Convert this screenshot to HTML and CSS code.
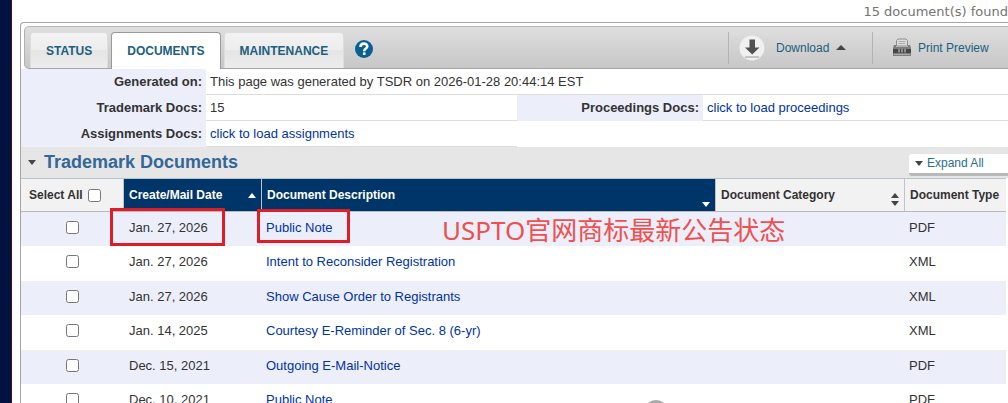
FILE: index.html
```
<!DOCTYPE html>
<html lang="en">
  <head>
    <meta charset="utf-8" />
    <meta name="viewport" content="width=device-width, initial-scale=1" />
    <title>Trademark Documents</title>
    <link rel="stylesheet" href="styles.css" />
  </head>

  <body>
    <div class="page">
      <p class="found">15 document(s) found</p>

      <main class="panel">
        <div class="toolbar">
          <nav class="tabs">
            <button type="button" class="tab">STATUS</button>
            <button type="button" class="tab active">DOCUMENTS</button>
            <button type="button" class="tab">MAINTENANCE</button>
          </nav>
          <a href="#" class="help" aria-label="Help">
            <svg width="18" height="18" viewBox="0 0 18 18">
              <circle cx="9" cy="9" r="9" fill="#075f94" />
              <path d="M5.5 6.9 C5.5 2.6 12.4 2.7 12.300 6.500 C12.200 8.700 9.200 8.500 9.200 11.200" fill="none" stroke="#fff" stroke-width="2.600" />
              <rect x="7.900" y="12.400" width="2.600" height="2.600" fill="#fff" />
            </svg>
          </a>
          <div class="tools">
            <button type="button" class="tool download">
              <svg width="26" height="26" viewBox="0 0 26 26">
                <circle cx="13" cy="13" r="12.5" fill="#f0f0f0" />
                <path d="M10.500 4.500h5.500v8h4.500L13.200 19.500 6 12.500h4.500z" fill="#505050" />
                <rect x="6" y="21" width="14" height="2" fill="#c4c4c4" />
              </svg>
              Download
              <span class="arrow up"></span>
            </button>
            <a href="#" class="tool print">
              <svg width="18" height="19" viewBox="0 0 18 19">
                <path d="M3.500 8V2.500L5 1h8l1.500 1.500V8z" fill="#dedede" stroke="#8c8c8c" />
                <path d="M5.500 3.500h7M5.500 5.500h7" stroke="#aaa" />
                <path d="M1 7h2v2h12V7h2l1 3v8H0v-8z" fill="#7d7d7d" />
                <rect y="11" width="18" height="4" fill="#464646" />
                <path d="M6 11v3.500M9 11v3.500M12 11v3.500" stroke="#d2d2d2" />
                <rect x="1" y="16" width="16" height="1" fill="#aaa" />
              </svg>
              Print Preview
            </a>
          </div>
        </div>

        <dl class="info">
          <dt>Generated on:</dt>
          <dd class="wide">This page was generated by TSDR on 2026-01-28 20:44:14 EST</dd>
          <dt>Trademark Docs:</dt>
          <dd>15</dd>
          <dt>Proceedings Docs:</dt>
          <dd><a href="#">click to load proceedings</a></dd>
          <dt>Assignments Docs:</dt>
          <dd><a href="#">click to load assignments</a></dd>
        </dl>

        <div class="section">
          <span class="arrow down"></span>
          <h2>Trademark Documents</h2>
          <button type="button" class="expand"><span class="arrow down"></span>Expand All</button>
        </div>

        <table class="docs">
          <thead>
            <tr>
              <th class="col-select">
                <label for="all">Select All <input type="checkbox" id="all" /></label>
              </th>
              <th class="col-date sorted">
                <div class="head">Create/Mail Date <span class="arrow up"></span></div>
              </th>
              <th class="col-desc sorted">
                <div class="head">Document Description <span class="arrow down low"></span></div>
              </th>
              <th class="col-category">
                <div class="head">
                  Document Category
                  <span class="both"><span class="arrow up"></span><span class="arrow down"></span></span>
                </div>
              </th>
              <th class="col-type">Document Type</th>
            </tr>
          </thead>
          <tbody>
            <tr>
              <td><input type="checkbox" aria-label="Select Public Note, Jan. 27, 2026" /></td>
              <td class="marked">Jan. 27, 2026<span class="mark mark-date"></span></td>
              <td class="marked">
                <a href="#">Public Note</a><span class="mark mark-desc"></span>
                <span class="note" lang="zh">USPTO官网商标最新公告状态</span>
              </td>
              <td></td>
              <td>PDF</td>
            </tr>
            <tr>
              <td><input type="checkbox" aria-label="Select Intent to Reconsider Registration" /></td>
              <td>Jan. 27, 2026</td>
              <td><a href="#">Intent to Reconsider Registration</a></td>
              <td></td>
              <td>XML</td>
            </tr>
            <tr>
              <td><input type="checkbox" aria-label="Select Show Cause Order to Registrants" /></td>
              <td>Jan. 27, 2026</td>
              <td><a href="#">Show Cause Order to Registrants</a></td>
              <td></td>
              <td>XML</td>
            </tr>
            <tr>
              <td><input type="checkbox" aria-label="Select Courtesy E-Reminder" /></td>
              <td>Jan. 14, 2025</td>
              <td><a href="#">Courtesy E-Reminder of Sec. 8 (6-yr)</a></td>
              <td></td>
              <td>XML</td>
            </tr>
            <tr>
              <td><input type="checkbox" aria-label="Select Outgoing E-Mail-Notice" /></td>
              <td>Dec. 15, 2021</td>
              <td><a href="#">Outgoing E-Mail-Notice</a></td>
              <td></td>
              <td>PDF</td>
            </tr>
            <tr>
              <td><input type="checkbox" aria-label="Select Public Note, Dec. 10, 2021" /></td>
              <td>Dec. 10, 2021</td>
              <td><a href="#">Public Note</a></td>
              <td></td>
              <td>PDF</td>
            </tr>
          </tbody>
        </table>
      </main>
      <span class="watermark"></span>
    </div>
  </body>
</html>
```
FILE: styles.css
```
* {
  box-sizing: border-box;
}
html {
  height: 100%;
  overflow: hidden;
}
body {
  height: 100%;
  margin: 0;
  overflow: hidden;
  background-color: #fff;
  color: #333;
  font-family: "Liberation Sans", Arial, sans-serif;
  font-size: 13px;
}
a {
  color: #0033a8;
  text-decoration: none;
}
button {
  border: 0;
  font-family: inherit;
  cursor: pointer;
}
.page {
  position: relative;
  height: 100%;
  padding-left: 8px;
  border-left: 12px solid #00123f;
}
.page::before {
  content: "";
  position: absolute;
  top: 0;
  bottom: 0;
  left: -1px;
  width: 1px;
  background-color: #4a1024;
}
.found {
  height: 22px;
  margin: 0;
  color: #747474;
  font-family: "DejaVu Sans", Verdana, sans-serif;
  line-height: 24px;
  text-align: right;
  white-space: nowrap;
}

/* panel */
.panel {
  border-top: 1px solid #a6a6a6;
  border-left: 1px solid #a6a6a6;
  border-top-left-radius: 4px;
}

/* toolbar */
.toolbar {
  display: flex;
  align-items: flex-end;
  height: 43px;
  margin: 3px 0 0 3px;
  padding-left: 5px;
  border-top: 1px solid #b8b8b8;
  border-bottom: 1px solid #a6a6a6;
  border-left: 1px solid #b0b0b0;
  border-radius: 5px 0 0 5px;
  background-image: linear-gradient(#dfdfdf, #d2d2d2 50%, #c8c8c8);
}
.tabs {
  display: flex;
  gap: 3px;
  margin-bottom: -1px;
}
.tab {
  height: 36px;
  margin-bottom: 1px;
  padding: 0 15px;
  border: 1px solid #ddd;
  border-bottom: 0;
  border-radius: 4px 4px 0 0;
  background-image: linear-gradient(#f2f2f2, #ededed 50%, #e5e5e5 50%, #ececec);
  color: #205f7d;
  font-size: 12px;
  font-weight: bold;
}
.tab.active {
  height: 37px;
  margin-bottom: 0;
  border-color: #999;
  background: #fff;
}
.help {
  height: 18px;
  margin: 0 0 10px 11px;
}
.help svg {
  display: block;
}
.tools {
  display: flex;
  align-self: center;
  margin-left: auto;
}
.tool {
  display: flex;
  align-items: center;
  height: 32px;
  padding: 0;
  border-left: 1px solid #b3b3b3;
  background: none;
  color: #205f7d;
  font-size: 12px;
}
.download {
  gap: 11px;
  width: 144px;
  padding-left: 10px;
}
.download .arrow {
  margin-left: -4px;
  border-width: 0 5px 5px;
}
.print {
  gap: 7px;
  width: 136px;
  padding-left: 20px;
}

/* arrows */
.arrow {
  display: block;
  flex: none;
  border: 0 solid transparent;
  border-width: 0 4px;
}
.up {
  border-bottom: 5px solid #444;
}
.down {
  border-top: 5px solid #444;
}

/* generated on, docs */
.info {
  display: grid;
  grid-template-columns: 185px minmax(311px, 1fr) 186px minmax(305px, 1fr);
  margin: 0;
  line-height: 25px;
}
.info dt {
  padding-right: 4px;
  background-color: #eceefa;
  font-weight: bold;
  text-align: right;
}
.info dd {
  margin: 0;
  padding-left: 4px;
  border-bottom: 1px solid #ddd;
}
.info .wide {
  grid-column: span 3;
}

/* section title */
.section {
  display: flex;
  align-items: center;
  height: 31px;
  padding-left: 7px;
  background-color: #e6e6e6;
}
.section h2 {
  margin: 0 auto 0 8px;
  color: #336699;
  font-size: 18px;
}
.expand {
  display: flex;
  align-items: center;
  gap: 4px;
  width: 99px;
  height: 22px;
  margin-top: 4px;
  padding: 0 0 0 6px;
  border-bottom: 3px solid #b9b9b9;
  border-radius: 3px 0 0 3px;
  background-color: #fff;
  color: #26708c;
  font-size: 12px;
}

/* table */
.docs {
  width: calc(100% - 2px);
  table-layout: fixed;
  border-collapse: separate;
  border-spacing: 0;
}
.docs th,
.docs td {
  padding: 0 5px;
  text-align: left;
  white-space: nowrap;
}
.docs th {
  height: 34px;
  border-top: 1px solid #b8c4cc;
  border-bottom: 1px solid #b8b8b8;
  background-color: #f2f2f2;
  font-size: 12px;
}
.docs .sorted {
  background-color: #003569;
  color: #fff;
}
.docs th + th {
  border-left: 1px solid #c0c4c8;
}
.docs .col-select {
  width: 102px;
  padding-left: 8px;
}
.col-date {
  width: 138px;
}
.col-category {
  width: 189px;
}
.col-type {
  width: 102px;
}
.col-select label,
.head {
  display: flex;
  align-items: center;
}
.col-select label {
  gap: 5px;
}
.head {
  justify-content: space-between;
  height: 32px;
}
.sorted .up {
  border-bottom-color: #fff;
}
.sorted .down {
  border-top-color: #fff;
}
.low {
  align-self: flex-end;
  margin-bottom: 4px;
}
.both {
  display: grid;
  gap: 3px;
  padding-top: 8px;
}
.docs td {
  height: 34px;
  padding-bottom: 4px;
}
.docs tr:nth-child(even) td {
  height: 35px;
}
.docs tbody tr:nth-child(odd) {
  background-color: #eceefa;
}
.docs td:first-child {
  padding: 0 0 6px;
  text-align: center;
}
.docs td:nth-child(2) {
  padding-left: 6px;
}
.docs input {
  width: 13px;
  height: 13px;
  margin: 0;
  vertical-align: middle;
}

/* red marks over the first row */
.marked {
  position: relative;
}
.mark {
  position: absolute;
  border: 3px solid #dc1f26;
}
.mark-date {
  top: -4px;
  left: -13px;
  width: 115px;
  height: 38px;
}
.mark-desc {
  top: -3px;
  left: -4px;
  width: 93px;
  height: 34px;
}
.note {
  position: absolute;
  top: 0;
  left: 181px;
  color: #f0504f;
  font-family: "Noto Sans", "Noto Sans CJK SC", sans-serif;
  font-size: 26px;
  line-height: 36px;
}
.watermark {
  position: absolute;
  bottom: -21px;
  left: 632px;
  width: 24px;
  height: 24px;
  border-radius: 50%;
  background-color: #aaa;
}
```
